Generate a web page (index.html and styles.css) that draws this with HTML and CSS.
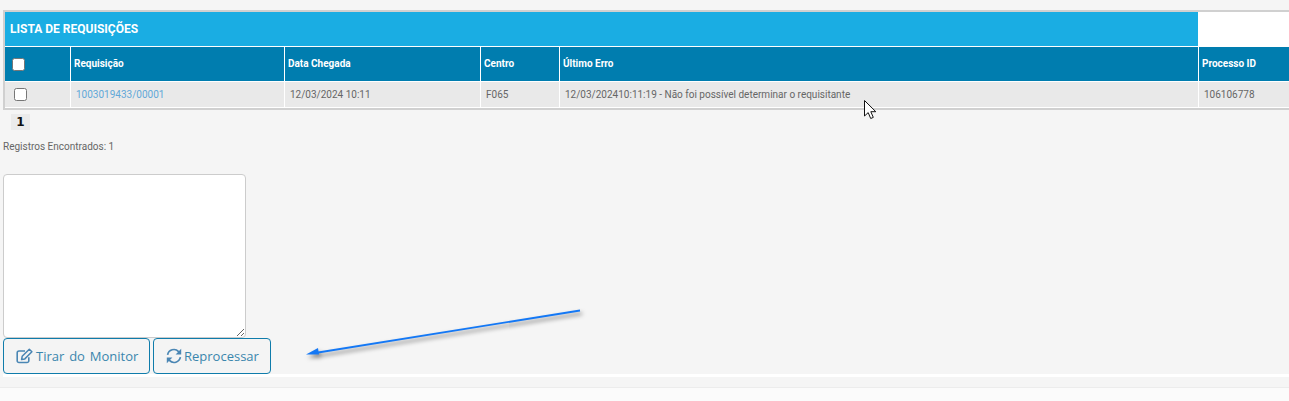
FILE: index.html
```html
<!DOCTYPE html>
<html lang="pt">
<head>
<meta charset="utf-8">
<title>Lista de Requisições</title>
<link rel="stylesheet" href="styles.css">
</head>
<body>
<main class="page">
  <section class="panel">
    <div class="title-row"><h1 class="title">LISTA DE REQUISIÇÕES</h1><div class="title-gap"></div></div>
    <div class="grid head">
      <div class="cell"><span class="check check-head"></span></div>
      <div class="cell">Requisição</div>
      <div class="cell">Data Chegada</div>
      <div class="cell">Centro</div>
      <div class="cell">Último Erro</div>
      <div class="cell">Processo ID</div>
    </div>
    <div class="grid row">
      <div class="cell"><span class="check check-row"></span></div>
      <div class="cell"><a class="link" href="#">1003019433/00001</a></div>
      <div class="cell">12/03/2024 10:11</div>
      <div class="cell">F065</div>
      <div class="cell">12/03/202410:11:19 - Não foi possível determinar o requisitante</div>
      <div class="cell">106106778</div>
    </div>
  </section>
  <div class="pager"><span class="page-num">1</span></div>
  <p class="count">Registros Encontrados: 1</p>
  <textarea class="note"></textarea>
  <div class="actions">
    <button class="btn btn-first" type="button">
      <svg class="icon" viewBox="0 0 17 16" aria-hidden="true"><path d="M12.800 9.200v3.500a1.800 1.800 0 0 1-1.800 1.800H3a1.800 1.800 0 0 1-1.800-1.800V4.800A1.800 1.800 0 0 1 3 3h6" fill="none" stroke="currentColor" stroke-width="1.600"/><path d="M6.200 8.300 13.300 1.200l2.600 2.600-7.100 7.100-3.200.6z" fill="none" stroke="currentColor" stroke-width="1.500" stroke-linejoin="round"/></svg>
      Tirar do Monitor
    </button>
    <button class="btn btn-second" type="button">
      <svg class="icon icon-sync" viewBox="0 0 16 16" aria-hidden="true"><path d="M1.600 6.800A6.400 6.400 0 0 1 12.600 3.600L14.400 5.400M14.400 9.200A6.400 6.400 0 0 1 3.400 12.400L1.600 10.600" fill="none" stroke="currentColor" stroke-width="1.700"/><path d="M15.200 .8v5.600H9.600zM.8 15.200V9.600h5.600z" fill="currentColor"/></svg>
      Reprocessar
    </button>
  </div>
  <div class="white-strip"></div>
  <div class="foot"></div>
  <svg class="arrow" width="300" height="60" viewBox="0 0 300 60" aria-hidden="true">
    <path d="M280 3.500 15 46" class="arrow-line"/>
    <path d="M6 47.500 18 41 19 47.500z" class="arrow-head"/>
  </svg>
  <svg class="cursor" width="16" height="22" viewBox="0 0 16 22" aria-hidden="true"><path d="M1.500 1.500v15.500l3.700-3.400 2.500 5.900 2.600-1.100-2.500-5.700h5z" fill="#fff" stroke="#111" stroke-width="1"/></svg>
</main>
</body>
</html>
```
FILE: styles.css
```css
* { box-sizing: border-box; }
html, body { margin: 0; padding: 0; }
body { background: #f5f5f5; font-family: Roboto, "Liberation Sans", sans-serif; overflow: hidden; }
.page { position: relative; width: 1289px; height: 401px; background: #f5f5f5; padding-top: 10px; overflow: hidden; }
.panel { width: 1290px; height: 100px; margin-left: 3px; border: 2px solid #d0d0d0; border-right: 0; background: #fff; overflow: hidden; }
.title-row { display: flex; height: 34px; }
.title { width: 1193px; margin: 0; padding: 0 5px; background: #1aade3; color: #fff; font-size: 12px; line-height: 34px; font-weight: 700; }
.title-gap { flex: 1; background: #fff; }
.grid { display: grid; grid-template-columns: 65px 213px 195px 78px 638px 1fr; column-gap: 1px; }
.head { height: 34px; margin-top: 1px; }
.head .cell { background: #007daf; color: #fff; font-size: 10px; font-weight: 700; line-height: 34px; padding-left: 3px; }
.row { height: 25px; margin-top: 1px; }
.row .cell { background: #e9e9e9; color: #666; font-size: 10px; line-height: 25px; padding-left: 5px; }
.head .cell:first-child, .row .cell:first-child { padding-left: 7px; }
.check { display: block; width: 13px; height: 13px; background: #fff; border: 1px solid #767676; border-radius: 2.500px; }
.check-head { margin-top: 11px; }
.check-row { margin-top: 6px; margin-left: 2px; }
.link { color: #62a8d8; text-decoration: none; }
.pager { margin: 4px 0 0 11px; height: 16px; }
.page-num { display: block; width: 19px; height: 16px; background: #ebebeb; text-align: center; font: 700 12px/16px "DejaVu Sans", sans-serif; color: #111; }
.count { margin: 11px 0 0 3px; font-size: 10px; line-height: 12px; color: #666; }
.note { display: block; width: 243px; height: 164px; margin: 21px 0 0 3px; background: #fff; border: 1px solid #ccc; border-radius: 4px; padding: 0; }
.actions { display: flex; gap: 3px; margin: 0 0 0 3px; }
.btn { display: flex; align-items: center; gap: 3px; height: 36px; background: #f4f4f4; border: 1px solid #0f7cab; border-radius: 4px; color: #3a86ad; font-family: "Open Sans", sans-serif; font-size: 13px; padding: 0 12px; white-space: nowrap; }
.btn-first { width: 147px; word-spacing: 1.500px; }
.btn-second { width: 118px; gap: 2px; }
.icon { width: 17px; height: 16px; flex: none; color: #4a86b4; }
.icon-sync { width: 16px; }
.white-strip { height: 3px; margin-left: 3px; background: #fff; }
.foot { height: 14px; margin-top: 10px; background: #fbfbfb; border-top: 1px solid #ececec; }
.arrow { position: absolute; left: 300px; top: 307px; filter: drop-shadow(2px 3px 2px rgba(0,0,0,.5)); }
.arrow-line { stroke: #1478f5; stroke-width: 1.800; fill: none; }
.arrow-head { fill: #1478f5; }
.cursor { position: absolute; left: 863px; top: 99px; }
```
